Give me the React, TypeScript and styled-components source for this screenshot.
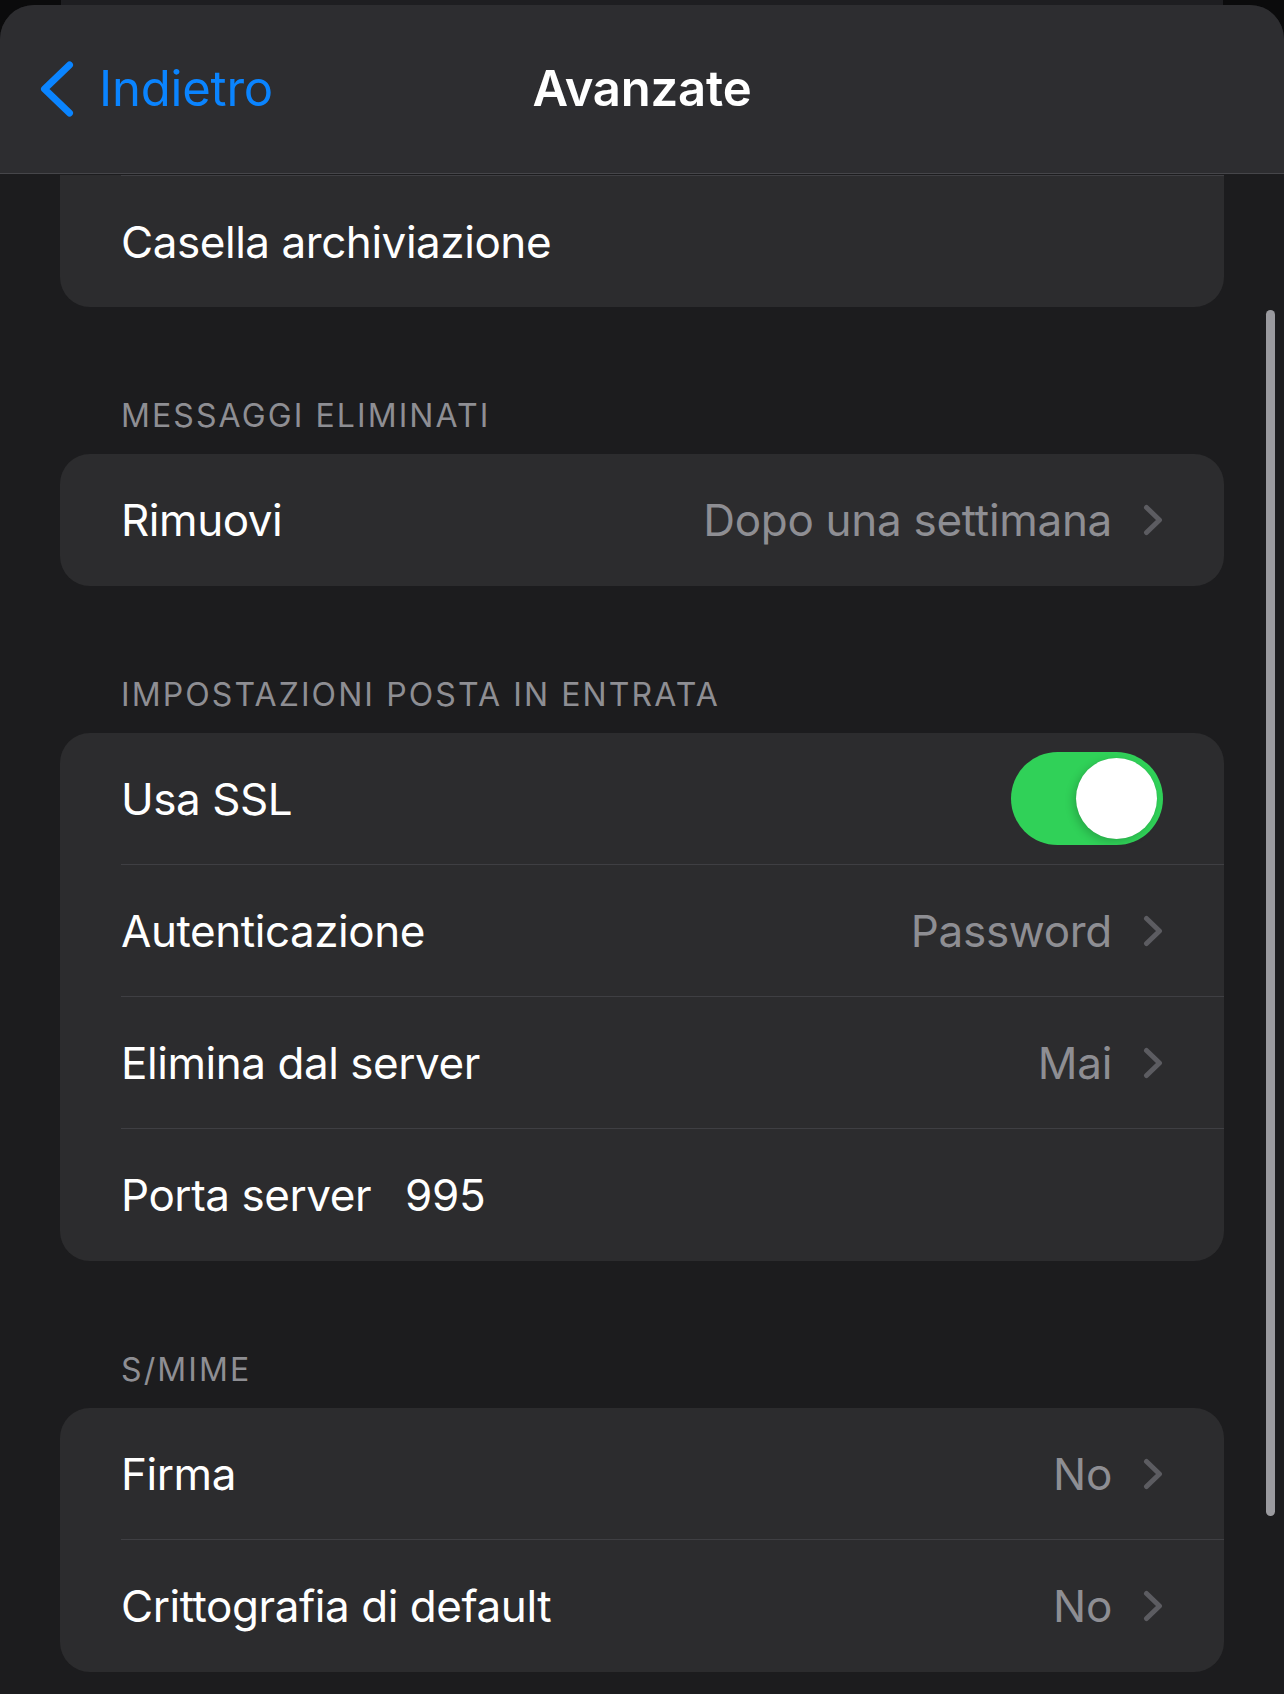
import React from "react";
import styled, { createGlobalStyle } from "styled-components";

const GlobalStyle = createGlobalStyle`
  html, body {
    margin: 0;
    padding: 0;
    background: #0b0b0c;
  }
  body {
    font-family: Inter, "Noto Sans", "Liberation Sans", sans-serif;
    -webkit-font-smoothing: antialiased;
  }
`;

const Screen = styled.div`
  width: 1284px;
  height: 1694px;
  display: flex;
  flex-direction: column;
  overflow: hidden;
  background: #0b0b0c;
`;

const Peek = styled.div`
  height: 5px;
  margin: 0 61px;
  flex: none;
  background: #1e1e21;
`;

const Sheet = styled.div`
  position: relative;
  flex: 1;
  display: flex;
  flex-direction: column;
  background: #1c1c1e;
  border-radius: 34px 34px 0 0;
  overflow: hidden;
`;

const NavBar = styled.header`
  flex: none;
  height: 168px;
  display: grid;
  grid-template-columns: 1fr auto 1fr;
  align-items: center;
  background: #2d2d30;
  border-bottom: 1px solid #46464a;
`;

const BackButton = styled.button`
  justify-self: start;
  display: flex;
  align-items: center;
  gap: 25px;
  margin-left: 40px;
  padding: 0;
  border: 0;
  background: none;
  color: #0a84ff;
  font-family: inherit;
  font-size: 49px;
  line-height: 60px;
  letter-spacing: -0.2px;
  cursor: pointer;
`;

const Title = styled.h1`
  margin: 0;
  color: #fff;
  font-size: 49px;
  font-weight: 600;
  line-height: 60px;
  letter-spacing: -0.2px;
`;

const Content = styled.main`
  flex: 1;
  padding: 1px 60px 0;
`;

const Card = styled.section<{ $clipped?: boolean }>`
  background: #2c2c2e;
  border-radius: ${(p) => (p.$clipped ? "0 0 30px 30px" : "30px")};
  overflow: hidden;
`;

const SectionHeader = styled.h2`
  margin: 0;
  padding: 89px 0 18px 61px;
  color: #8e8e93;
  font-size: 32px;
  font-weight: 400;
  line-height: 40px;
  letter-spacing: 2.1px;
`;

const Row = styled.div`
  padding-left: 61px;
`;

const RowBody = styled.div<{ $top?: boolean; $bottom?: boolean }>`
  box-sizing: border-box;
  height: 132px;
  display: flex;
  align-items: center;
  padding-right: 61px;
  border-top: ${(p) => (p.$top ? "1px solid #3f3f43" : "0")};
  border-bottom: ${(p) => (p.$bottom ? "1px solid #3f3f43" : "0")};
`;

const Label = styled.span`
  color: #fff;
  font-size: 44px;
  line-height: 54px;
  letter-spacing: -0.45px;
  white-space: nowrap;
`;

const Value = styled.span`
  margin-left: auto;
  color: #8e8e93;
  font-size: 44px;
  line-height: 54px;
  letter-spacing: -0.3px;
  white-space: nowrap;
`;

const FieldValue = styled.span`
  margin-left: 34px;
  color: #fff;
  font-size: 44px;
  line-height: 54px;
  letter-spacing: -0.3px;
`;

const Disclosure = styled.svg`
  flex: none;
  width: 20px;
  height: 32px;
  margin-left: 31px;
  color: #5c5c61;
`;

const Toggle = styled.div<{ $on: boolean }>`
  position: relative;
  margin-left: auto;
  width: 152px;
  height: 93px;
  border-radius: 47px;
  background: ${(p) => (p.$on ? "#30d158" : "#39393d")};
  flex: none;
`;

const Knob = styled.div<{ $on: boolean }>`
  position: absolute;
  top: 6px;
  left: ${(p) => (p.$on ? "65px" : "6px")};
  width: 81px;
  height: 81px;
  border-radius: 50%;
  background: #fff;
  box-shadow: -3px 3px 8px rgba(0, 0, 0, 0.18), 0 0 1px rgba(0, 0, 0, 0.12);
`;

const ScrollIndicator = styled.div`
  position: absolute;
  right: 9px;
  top: 305px;
  width: 9px;
  height: 1206px;
  border-radius: 5px;
  background: #9a9a9f;
`;

const Chevron = () => (
  <Disclosure viewBox="0 0 20 32" fill="none">
    <path
      d="M3.5 3.5 L16.5 16 L3.5 28.5"
      stroke="currentColor"
      strokeWidth="5"
      strokeLinecap="round"
      strokeLinejoin="round"
    />
  </Disclosure>
);

const BackChevron = () => (
  <svg width="34" height="56" viewBox="0 0 34 56" fill="none">
    <path
      d="M29.5 4 L4.5 28 L29.5 52"
      stroke="currentColor"
      strokeWidth="7"
      strokeLinecap="round"
      strokeLinejoin="round"
    />
  </svg>
);

type Item = {
  label: string;
  value?: string;
  field?: string;
  toggle?: boolean;
};

const Group = ({ items, clipped }: { items: Item[]; clipped?: boolean }) => (
  <Card $clipped={clipped}>
    {items.map((it, i) => (
      <Row key={it.label}>
        <RowBody $top={clipped && i === 0} $bottom={i < items.length - 1}>
          <Label>{it.label}</Label>
          {it.field && <FieldValue>{it.field}</FieldValue>}
          {it.toggle !== undefined && (
            <Toggle $on={it.toggle}>
              <Knob $on={it.toggle} />
            </Toggle>
          )}
          {it.value && (
            <>
              <Value>{it.value}</Value>
              <Chevron />
            </>
          )}
        </RowBody>
      </Row>
    ))}
  </Card>
);

export default function App() {
  return (
    <Screen>
      <GlobalStyle />
      <Peek />
      <Sheet>
        <NavBar>
          <BackButton>
            <BackChevron />
            Indietro
          </BackButton>
          <Title>Avanzate</Title>
          <div />
        </NavBar>
        <Content>
          <Group clipped items={[{ label: "Casella archiviazione" }]} />

          <SectionHeader>MESSAGGI ELIMINATI</SectionHeader>
          <Group items={[{ label: "Rimuovi", value: "Dopo una settimana" }]} />

          <SectionHeader>IMPOSTAZIONI POSTA IN ENTRATA</SectionHeader>
          <Group
            items={[
              { label: "Usa SSL", toggle: true },
              { label: "Autenticazione", value: "Password" },
              { label: "Elimina dal server", value: "Mai" },
              { label: "Porta server", field: "995" },
            ]}
          />

          <SectionHeader>S/MIME</SectionHeader>
          <Group
            items={[
              { label: "Firma", value: "No" },
              { label: "Crittografia di default", value: "No" },
            ]}
          />
        </Content>
        <ScrollIndicator />
      </Sheet>
    </Screen>
  );
}
